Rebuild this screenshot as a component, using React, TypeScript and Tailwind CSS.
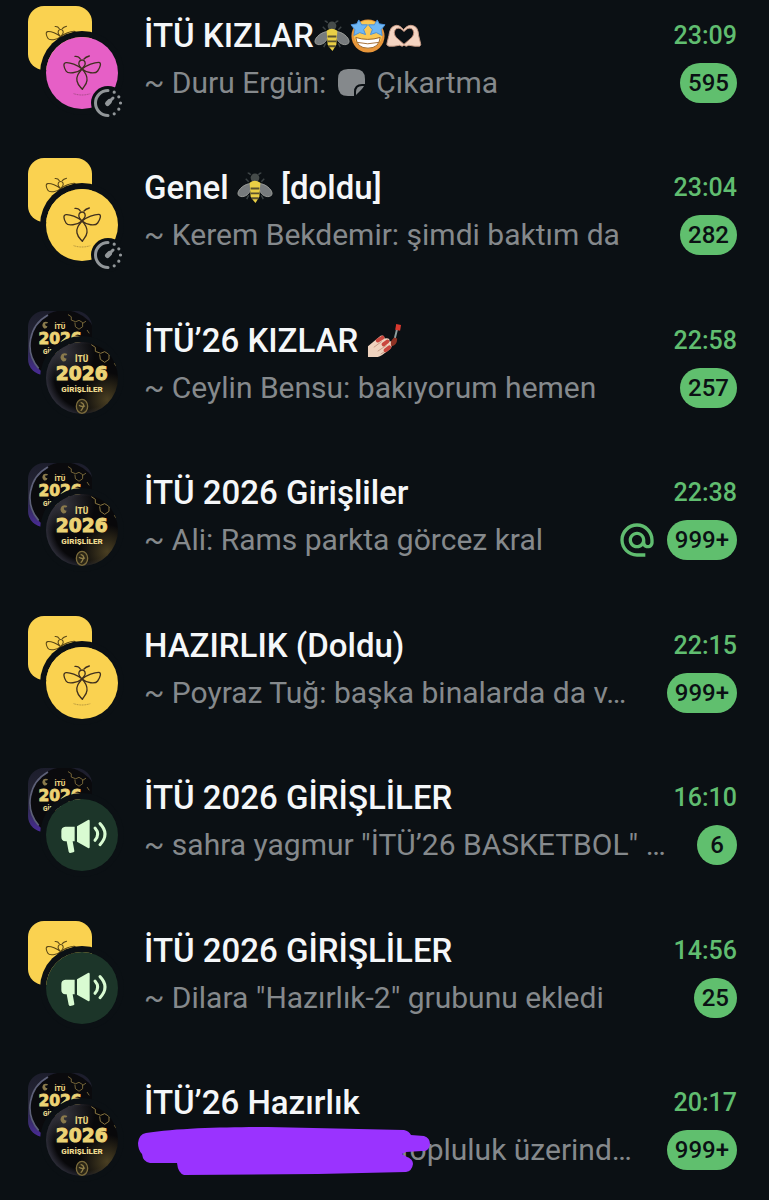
import type { ReactNode } from "react";
import { MdAlternateEmail } from "react-icons/md";

type Art = "bee" | "beePink" | "disc" | "announce";

type Chat = {
  id: string;
  name: ReactNode;
  preview: ReactNode;
  time: string;
  unread: string;
  back: "bee" | "disc";
  front: Art;
  timer?: boolean;
  mention?: boolean;
};

const chats: Chat[] = [
  {
    id: "kizlar",
    name: (
      <>
        İTÜ KIZLAR
        <BeeEmoji />
        <StarStruckEmoji />
        <HeartHandsEmoji />
      </>
    ),
    preview: (
      <>
        ~ Duru Ergün: <StickerIcon /> Çıkartma
      </>
    ),
    time: "23:09",
    unread: "595",
    back: "bee",
    front: "beePink",
    timer: true,
  },
  {
    id: "genel",
    name: (
      <>
        Genel <BeeEmoji /> [doldu]
      </>
    ),
    preview: "~ Kerem Bekdemir: şimdi baktım da",
    time: "23:04",
    unread: "282",
    back: "bee",
    front: "bee",
    timer: true,
  },
  {
    id: "kizlar-26",
    name: (
      <>
        İTÜ’26 KIZLAR <NailsEmoji />
      </>
    ),
    preview: "~ Ceylin Bensu: bakıyorum hemen",
    time: "22:58",
    unread: "257",
    back: "disc",
    front: "disc",
  },
  {
    id: "girisliler",
    name: "İTÜ 2026 Girişliler",
    preview: "~ Ali: Rams parkta görcez kral",
    time: "22:38",
    unread: "999+",
    back: "disc",
    front: "disc",
    mention: true,
  },
  {
    id: "hazirlik",
    name: "HAZIRLIK (Doldu)",
    preview: "~ Poyraz Tuğ: başka binalarda da v…",
    time: "22:15",
    unread: "999+",
    back: "bee",
    front: "bee",
  },
  {
    id: "duyuru-1",
    name: "İTÜ 2026 GİRİŞLİLER",
    preview: "~ sahra yagmur \"İTÜ’26 BASKETBOL\" …",
    time: "16:10",
    unread: "6",
    back: "disc",
    front: "announce",
  },
  {
    id: "duyuru-2",
    name: "İTÜ 2026 GİRİŞLİLER",
    preview: "~ Dilara \"Hazırlık-2\" grubunu ekledi",
    time: "14:56",
    unread: "25",
    back: "bee",
    front: "announce",
  },
  {
    id: "hazirlik-26",
    name: "İTÜ’26 Hazırlık",
    preview: (
      <span className="relative block pl-[256px]">
        topluluk üzerind…
        <Scribble />
      </span>
    ),
    time: "20:17",
    unread: "999+",
    back: "disc",
    front: "disc",
  },
];

export default function App() {
  return (
    <main className="min-h-screen bg-[#0b1014] font-['Roboto',sans-serif]">
      <ul className="flex min-h-screen flex-col justify-between gap-8 pt-[6px] pb-6">
        {chats.map((chat) => (
          <li key={chat.id}>
            <ChatRow chat={chat} />
          </li>
        ))}
      </ul>
    </main>
  );
}

function ChatRow({ chat }: { chat: Chat }) {
  return (
    <a href={`#${chat.id}`} className="flex gap-[26px] pr-8 pl-7">
      <Avatar back={chat.back} front={chat.front} timer={chat.timer} />
      <div className="flex min-w-0 flex-1 flex-col gap-[7px] pt-[10px]">
        <div className="flex items-center justify-between gap-4">
          <h2 className="text-[33px] leading-10 font-medium whitespace-nowrap text-[#f5f7f9]">
            {chat.name}
          </h2>
          <time className="text-[25px] leading-10 font-medium text-[#60bd70]">
            {chat.time}
          </time>
        </div>
        <div className="flex items-center justify-between">
          <p className="min-w-0 text-[30px] leading-10 whitespace-nowrap text-[#85898c]">
            {chat.preview}
          </p>
          <div className="flex shrink-0 items-center gap-[10px]">
            {chat.mention && (
              <MdAlternateEmail
                className="size-10 text-[#60bd70]"
                aria-label="Mentioned"
              />
            )}
            <span className="h-10 min-w-10 rounded-full bg-[#60bf6e] px-2 text-center text-[24px] leading-10 font-medium text-[#0b1014]">
              {chat.unread}
            </span>
          </div>
        </div>
      </div>
    </a>
  );
}

function Avatar({
  back,
  front,
  timer,
}: {
  back: "bee" | "disc";
  front: Art;
  timer?: boolean;
}) {
  return (
    <div className="relative h-[103px] w-[90px] shrink-0">
      <div className="size-16 overflow-hidden rounded-2xl">
        {back === "bee" ? (
          <svg viewBox="0 0 192 192" className="size-full bg-[#fad250]">
            <g transform="translate(98 92) scale(0.8)">
              <BeeLines color="#5a4716" />
            </g>
          </svg>
        ) : (
          <svg
            viewBox="0 0 192 192"
            className="size-full bg-linear-to-b from-[#1c1d2c] via-[#262637] to-[#4b2a9a]"
          >
            <circle cx="108" cy="102" r="104" fill="#0a0a0d" />
            <path
              d="M60 12A104 104 0 0 0 32 172"
              fill="none"
              stroke="#5d6078"
              strokeWidth="5"
            />
            <g transform="translate(7 4) scale(0.83)">
              <DiscLines />
            </g>
          </svg>
        )}
      </div>
      <div className="absolute top-[31px] left-[18px] size-[72px] overflow-hidden rounded-full ring-[6px] ring-[#0b1014]">
        {front === "bee" && <BeeFace className="size-full bg-[#fad250]" />}
        {front === "beePink" && <BeeFace className="size-full bg-[#e65fc6]" />}
        {front === "disc" && (
          <svg
            viewBox="0 0 216 216"
            className="size-full bg-[radial-gradient(circle_at_85%_80%,#4a3f22_0%,transparent_32%),radial-gradient(circle_at_25%_15%,#34343c_0%,transparent_38%),radial-gradient(circle_at_56%_48%,#08080a_58%,#2e2e3a_74%)]"
          >
            <DiscLines />
            <ellipse
              cx="108"
              cy="193"
              rx="17"
              ry="21"
              fill="#2a2516"
              stroke="#7c6c3c"
              strokeWidth="4"
            />
            <path
              d="M104 181q12 4 8 13t-8 12M99 190q8 6 18 2"
              fill="none"
              stroke="#8f7e48"
              strokeWidth="4"
            />
          </svg>
        )}
        {front === "announce" && <Megaphone />}
      </div>
      {timer && <TimerBadge />}
    </div>
  );
}

function BeeFace({ className }: { className: string }) {
  return (
    <svg viewBox="0 0 216 216" className={className}>
      <g transform="translate(108 96)">
        <BeeLines color="#40301e" />
        <path
          d="M-25 74q25 8 50 0"
          fill="none"
          stroke="#40301e"
          strokeOpacity="0.6"
          strokeWidth="2"
          strokeDasharray="3 2"
        />
      </g>
    </svg>
  );
}

// Drawn around the point where the wings cross.
function BeeLines({ color }: { color: string }) {
  return (
    <g
      fill="none"
      stroke={color}
      strokeWidth="4"
      strokeLinecap="round"
      strokeLinejoin="round"
    >
      <path d="M-7-8C-13-18-8-27 0-27S13-18 7-9L0 0" />
      <path d="M0 0C-14-12-36-20-48-19C-58-18-54-4-48 6C-42 16-14 12 0 0C14 12 40 16 47 6C54-4 60-20 50-20C38-20 14-12 0 0L-7-8" />
      <path d="M0 0C-10 12-18 22-15 36C-12 50-4 54 1 61C6 52 14 46 15 34C16 22 10 10 0 0" />
      <path d="M-5-30q-5-9-16-8M6-30q5-6 16-9" />
    </g>
  );
}

function DiscLines() {
  return (
    <g className="font-['DejaVu_Sans',sans-serif] font-bold" textAnchor="middle">
      <path
        d="M136 8l12 8v12l16 6 12-5 13 8v15l-13 9-13-9-2-15M189 40l12-8M205 64l8 12"
        fill="none"
        stroke="#8a7741"
        strokeWidth="3"
      />
      <path d="M48 36q-10 12 2 22 10 2 12-8-10 0-8-10 8 2 10-4-8-4-16 0" fill="#8a7a4c" />
      <text
        x="107"
        y="59"
        fontSize="25"
        fill="#e8d27e"
        className="font-['Roboto',sans-serif] font-black"
      >
        İTÜ
      </text>
      <text x="107" y="115" fontSize="56" fill="#ecd375" stroke="#ecd375" strokeWidth="3">
        2026
      </text>
      <text
        x="108"
        y="151"
        fontSize="24"
        fill="#ecd98e"
        className="font-['Roboto',sans-serif] font-black"
      >
        GİRİŞLİLER
      </text>
    </g>
  );
}

function Megaphone() {
  return (
    <svg viewBox="0 0 216 216" className="size-full bg-[#1c3529]">
      <g fill="#d9fbd2">
        <path d="M58 83h28v44H80l5 28q1 4-3 5l-9 2q-4 0-5-4l-6-31h-4q-12-1-12-13V96q0-12 12-13z" />
        <path d="M93 82l33-19q5-2 5 3v78q0 5-5 3l-33-19z" />
      </g>
      <g fill="none" stroke="#d9fbd2" strokeWidth="9" strokeLinecap="round">
        <path d="M147 87q16 18 0 37" />
        <path d="M162 74q30 31 0 63" />
      </g>
    </svg>
  );
}

function TimerBadge() {
  return (
    <svg
      viewBox="0 0 32 32"
      className="absolute top-[81px] left-[64px] size-8 overflow-visible"
      fill="none"
      stroke="#92979a"
      strokeLinecap="round"
    >
      <circle cx="16" cy="16" r="17" fill="#0b1014" stroke="none" />
      <path d="M16 3.5A12.500 12.500 0 0 0 16 28.5" strokeWidth="3" />
      <path d="M15.500 16.500L21 11" strokeWidth="3" />
      <path d="M15.500 16.500l2-2" strokeWidth="5" />
      <path
        d="M22.200 5.200h.01M26.800 9.800h.01M28.500 16h.01M26.800 22.200h.01M22.200 26.800h.01"
        strokeWidth="3.2"
      />
    </svg>
  );
}

function StickerIcon() {
  return (
    <svg
      viewBox="0 0 27 27"
      className="mx-1 inline-block size-[27px] align-[-3px]"
      fill="#85898c"
    >
      <path d="M10 0h7q10 0 10 10v5h-3q-8 0-8 8v4h-6Q0 27 0 17v-7Q0 0 10 0z" />
      <path d="M26 17q-1 2-3 4l-2 2q-2 2-3 3v-3q0-6 6-6z" />
    </svg>
  );
}

function Scribble() {
  return (
    <svg
      viewBox="0 0 292 50"
      className="absolute top-[-4px] left-[-6px] h-[50px] w-[292px]"
      fill="#9a33ff"
      aria-hidden
    >
      <path d="M8 7C40 2 90 1 130 1L266 4Q271 5 273 9L286 10Q292 12 292 18Q291 26 284 25L268 26L264 28L269 31Q275 33 275 38Q274 45 268 46L180 48L46 49Q40 47 39 37L12 37Q5 36 4 28Q0 24 0 17Q1 8 8 7z" />
    </svg>
  );
}

function BeeEmoji() {
  return (
    <svg viewBox="0 0 37 37" className="inline-block size-9 align-[-7px]">
      <path
        d="M14 5q-1-2-3-2M22 5q1-2 3-2M12 12l-3-3M25 12l3-3M12 26l-2 4M25 26l2 4"
        fill="none"
        stroke="#3c4345"
        strokeWidth="1.5"
      />
      <circle cx="18.5" cy="8" r="4.5" fill="#454b4a" />
      <path d="M14 14C8 14 1 20 1 24c0 5 8 4 11 0 2-3 3-6 2-10z" fill="#777b7d" stroke="#9a9c98" />
      <path d="M23 14c6 0 13 6 13 10 0 5-8 4-11 0-2-3-3-6-2-10z" fill="#777b7d" stroke="#9a9c98" />
      <path d="M13 13q5-4 11 0l-1 14q-2 4-4 7-3-3-5-7z" fill="#e9cf45" />
      <path d="M14 19h9M14 24h9M15 29h7" stroke="#5a5230" strokeWidth="2" />
    </svg>
  );
}

function StarStruckEmoji() {
  return (
    <svg viewBox="0 0 37 37" className="inline-block size-9 align-[-7px]">
      <circle cx="18.5" cy="18.5" r="17" fill="#e8963a" />
      <circle cx="18.5" cy="17" r="14.5" fill="#fbc852" />
      <path d="M6 20q12 4 25 0-1 11-12.500 11T6 20z" fill="#fff" stroke="#9c6424" />
      <path d="M7 25q11 3 23 0" fill="none" stroke="#a87137" />
      <g fill="#6fb7f4" stroke="#4a90d9" strokeWidth="1">
        <path d="M9 2l3 5 6 0-4 5 2 5-6-2-6 3 1-6-4-5 6-1z" />
        <path d="M28 2l2 4 6 1-4 5 1 6-6-3-6 2 2-5-4-5 6 0z" />
      </g>
    </svg>
  );
}

function HeartHandsEmoji() {
  return (
    <svg viewBox="0 0 37 37" className="inline-block size-9 align-[-7px]">
      <path
        d="M18 12Q13 6 9 8Q4 9 3 18L1 26q-1 2 2 3l5 0 6-1q3 2 4.500 0 2 2 5 0l6 1 5 0q2-1 1-3l-2-8Q33 9 28 8q-5-2-10 4z"
        fill="#f5d5c2"
        stroke="#c99c87"
        strokeWidth="1"
      />
      <path
        d="M18.500 14q-4-5-8-3-4 4 0 9l8 7 8-7q4-5 0-9-4-2-8 3z"
        fill="#0b1014"
        stroke="#c08f7a"
      />
    </svg>
  );
}

function NailsEmoji() {
  return (
    <svg viewBox="0 0 37 37" className="inline-block size-9 align-[-7px]">
      <path d="M1 24l13-11q4-1 4 3 6-1 5 3 4-1 3 3-1 5-8 9-5 4-9 4H1z" fill="#f0d3bf" />
      <path d="M7 25l8-6M11 29l9-6M14 32l8-5" stroke="#c69b86" />
      <g fill="none" stroke="#c9473e" strokeWidth="4" strokeLinecap="round">
        <path d="M11 18l5-3M17 22l4-3M19 28l4-3" />
      </g>
      <path d="M31 6l-3 12" stroke="#8fa0a0" strokeWidth="2" />
      <path d="M28 15q-5 4-3 9 6-1 6-8z" fill="#8f3224" />
      <path d="M30 1l5 1-1 6-5-1z" fill="#d8392f" />
    </svg>
  );
}
